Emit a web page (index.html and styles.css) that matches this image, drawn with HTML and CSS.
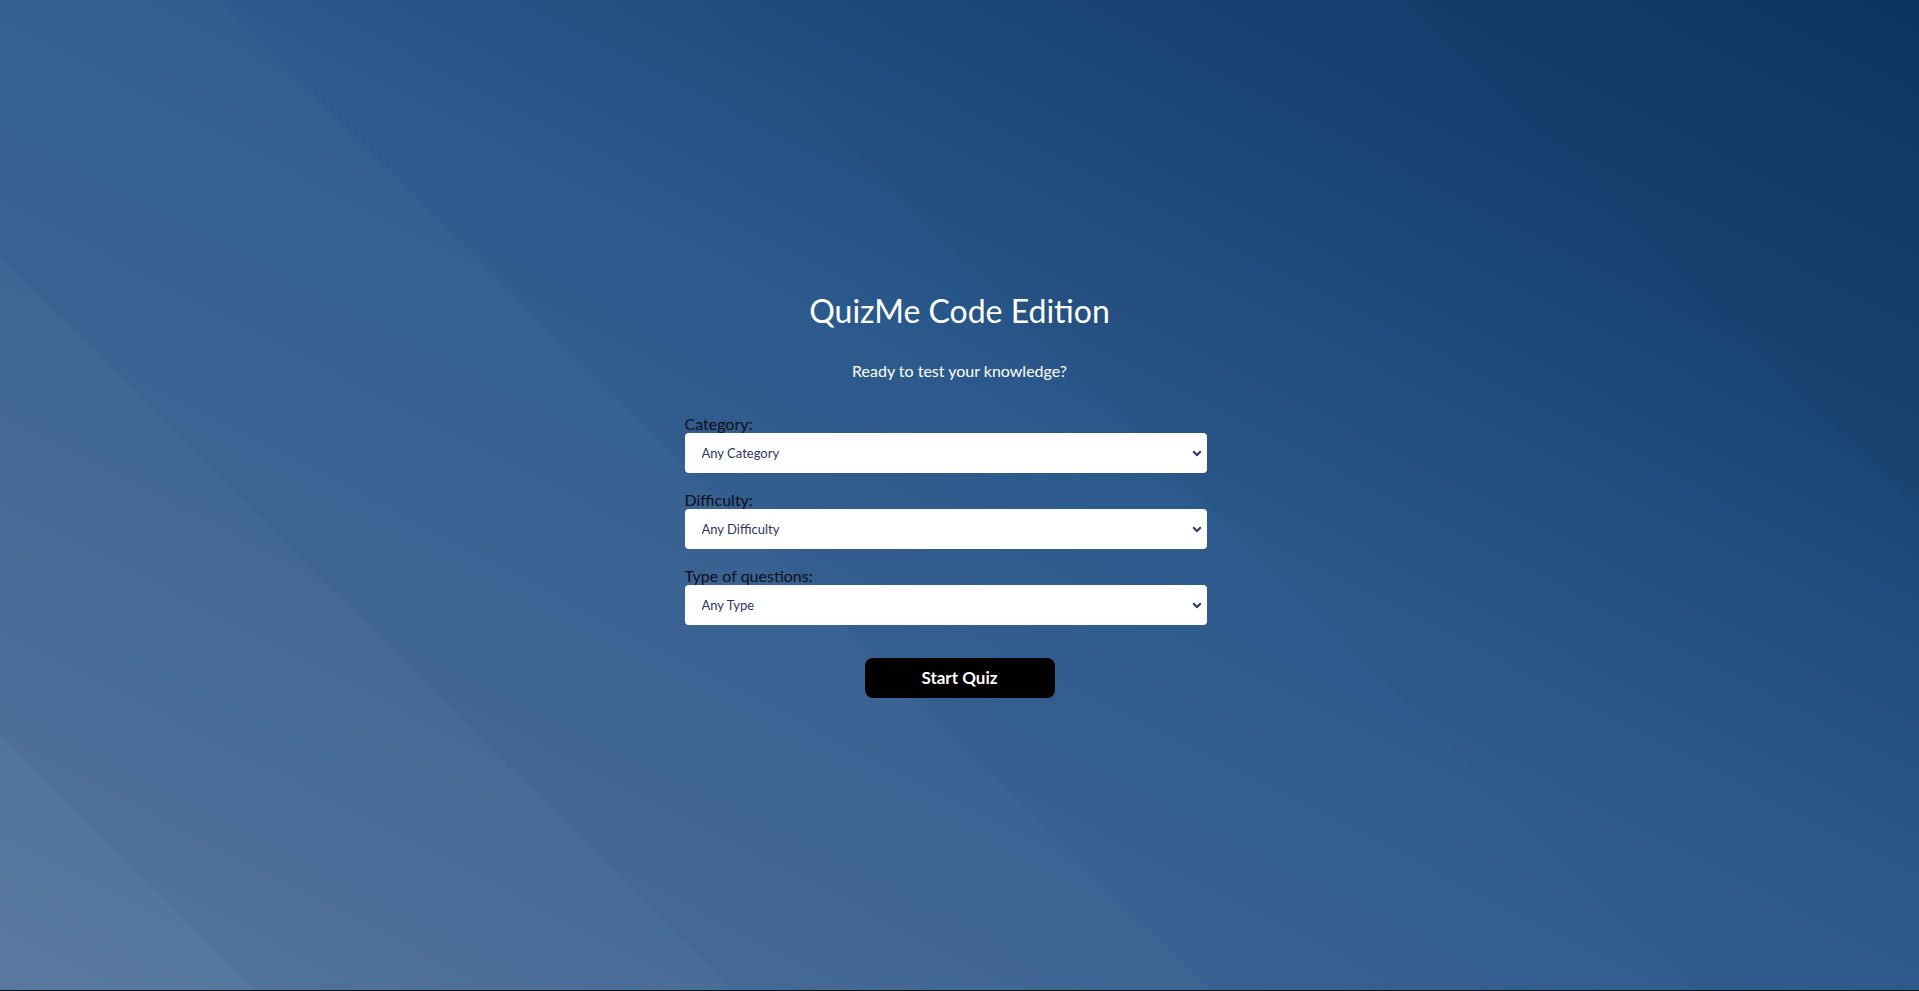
FILE: index.html
```html
<!DOCTYPE html>
<html lang="en">
<head>
<meta charset="utf-8">
<title>QuizMe Code Edition</title>
<link rel="stylesheet" href="styles.css">
</head>
<body>
<main class="page">
  <section class="quiz">
    <h1 class="title">QuizMe Code Edition</h1>
    <p class="subtitle">Ready to test your knowledge?</p>
    <form class="form">
      <div class="field">
        <label class="label" for="category">Category:</label>
        <div class="select-wrap">
          <select class="select" id="category">
            <option>Any Category</option>
          </select>
          <svg class="chevron" width="10" height="7" viewBox="0 0 10 7"><path d="M1.2 1.3 L5 5 L8.8 1.3" fill="none" stroke="#2e3560" stroke-width="2"/></svg>
        </div>
      </div>
      <div class="field">
        <label class="label" for="difficulty">Difficulty:</label>
        <div class="select-wrap">
          <select class="select" id="difficulty">
            <option>Any Difficulty</option>
          </select>
          <svg class="chevron" width="10" height="7" viewBox="0 0 10 7"><path d="M1.2 1.3 L5 5 L8.8 1.3" fill="none" stroke="#2e3560" stroke-width="2"/></svg>
        </div>
      </div>
      <div class="field">
        <label class="label" for="type">Type of questions:</label>
        <div class="select-wrap">
          <select class="select" id="type">
            <option>Any Type</option>
          </select>
          <svg class="chevron" width="10" height="7" viewBox="0 0 10 7"><path d="M1.2 1.3 L5 5 L8.8 1.3" fill="none" stroke="#2e3560" stroke-width="2"/></svg>
        </div>
      </div>
      <div class="actions">
        <button class="start" type="button">Start Quiz</button>
      </div>
    </form>
  </section>
</main>
</body>
</html>
```

FILE: styles.css
```css
* { box-sizing: border-box; }

html, body {
  margin: 0;
  padding: 0;
}

body {
  font-family: Lato, "Open Sans", sans-serif;
  color: #000;
  background-color: #2c5888;
  background-image:
    linear-gradient(45deg,
      rgba(255,255,255,0.07) 0%, rgba(255,255,255,0.07) 8.8%,
      rgba(255,255,255,0.045) 8.8%, rgba(255,255,255,0.045) 25.2%,
      rgba(255,255,255,0.025) 25.2%, rgba(255,255,255,0.025) 41.6%,
      rgba(255,255,255,0) 41.6%, rgba(255,255,255,0) 58.2%,
      rgba(0,0,0,0.025) 58.2%, rgba(0,0,0,0.025) 82.4%,
      rgba(0,0,0,0.05) 82.4%, rgba(0,0,0,0.05) 100%),
    linear-gradient(to top right, #4c6f98 0%, #3a6191 30%, #2c5a8c 55%, #1c4778 75%, #0e3667 100%);
}

.page {
  height: 100vh;
  display: flex;
  align-items: center;
  justify-content: center;
  border-bottom: 1px solid #111;
}

.quiz {
  width: 550px;
  padding-bottom: 2px;
  text-align: center;
}

.title {
  margin: 0;
  font-size: 32px;
  line-height: 40px;
  font-weight: 400;
  color: #fff;
}

.subtitle {
  margin: 30px 0 0;
  font-size: 16px;
  line-height: 20px;
  color: #fff;
}

.form {
  margin-top: 34px;
  text-align: left;
}

.field {
  width: 95%;
  margin-bottom: 18px;
}

.label {
  display: block;
  font-size: 16px;
  line-height: 18px;
  color: #0a0f18;
}

.select-wrap {
  position: relative;
}

.select {
  display: block;
  width: 100%;
  height: 40px;
  margin: 0;
  padding: 0 30px 0 17px;
  border: none;
  border-radius: 4px;
  background: #fff;
  font-family: Lato, "Open Sans", sans-serif;
  font-size: 13px;
  color: #2e3560;
  -webkit-appearance: none;
  appearance: none;
  outline: none;
}

.chevron {
  position: absolute;
  right: 5px;
  top: 17px;
  pointer-events: none;
}

.actions {
  margin-top: 33px;
  text-align: center;
}

.start {
  width: 190px;
  height: 40px;
  border: none;
  border-radius: 8px;
  background: #000;
  color: #fff;
  font-family: Lato, "Open Sans", sans-serif;
  font-size: 17px;
  font-weight: 700;
  cursor: pointer;
}
```
